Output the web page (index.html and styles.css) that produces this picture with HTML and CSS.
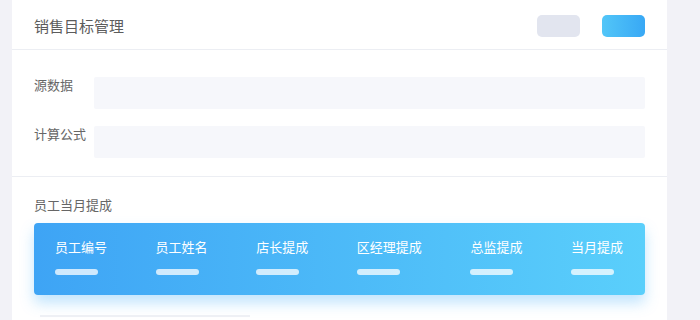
FILE: index.html
```html
<!DOCTYPE html>
<html lang="zh">
<head>
<meta charset="utf-8">
<link rel="stylesheet" href="styles.css">
</head>
<body>
<div class="card">
  <div class="header">
    <div class="title">销售目标管理</div>
    <div class="actions">
      <span class="btn btn-grey"></span>
      <span class="btn btn-blue"></span>
    </div>
  </div>
  <div class="form">
    <div class="row"><span class="label">源数据</span><div class="input"></div></div>
    <div class="row"><span class="label">计算公式</span><div class="input"></div></div>
  </div>
  <div class="section">
    <div class="section-title">员工当月提成</div>
    <div class="table-head">
      <div class="col"><span>员工编号</span><i class="bar"></i></div>
      <div class="col"><span>员工姓名</span><i class="bar"></i></div>
      <div class="col"><span>店长提成</span><i class="bar"></i></div>
      <div class="col"><span>区经理提成</span><i class="bar"></i></div>
      <div class="col"><span>总监提成</span><i class="bar"></i></div>
      <div class="col"><span>当月提成</span><i class="bar"></i></div>
    </div>
    <div class="next-row"></div>
  </div>
</div>
</body>
</html>
```
FILE: styles.css
```css
html, body {
  margin: 0;
  padding: 0;
  background: #f2f2f7;
  height: 320px;
  overflow: hidden;
}
body {
  font-family: "Noto Sans CJK SC", "Noto Sans", sans-serif;
  color: #666;
}
.card {
  margin-left: 12px;
  width: 655px;
  height: 320px;
  background: #fff;
}
.header {
  height: 50px;
  box-sizing: border-box;
  border-bottom: 1px solid #eceef3;
  display: flex;
  align-items: center;
  justify-content: space-between;
  padding: 0 22px 0 22px;
}
.title {
  font-size: 15px;
  color: #5c5c5c;
  line-height: 20px;
  margin-top: 3px;
}
.actions {
  display: flex;
  gap: 22px;
  margin-top: 2px;
}
.btn {
  display: block;
  width: 43px;
  height: 22px;
  border-radius: 5px;
}
.btn-grey { background: #e2e5ef; }
.btn-blue { background: linear-gradient(90deg, #52c6f8, #38a8f5); }
.form {
  padding: 27px 22px 18px 22px;
  display: flex;
  flex-direction: column;
  gap: 17px;
  border-bottom: 1px solid #eceef3;
}
.row {
  display: flex;
  align-items: flex-start;
}
.label {
  width: 60px;
  font-size: 13px;
  line-height: 16px;
  color: #666;
}
.input {
  flex: 1;
  height: 32px;
  background: #f6f7fb;
  border-radius: 2px;
}
.section {
  padding: 20px 22px 0 22px;
}
.section-title {
  font-size: 13px;
  line-height: 16px;
  color: #666;
  margin-bottom: 10px;
}
.table-head {
  height: 72px;
  border-radius: 4px;
  background: linear-gradient(90deg, #3ea4f5, #5acffb);
  box-shadow: 0 8px 14px rgba(80, 180, 250, 0.35);
  display: flex;
  justify-content: space-between;
  padding: 0 22px 0 21px;
}
.col {
  display: flex;
  flex-direction: column;
  padding-top: 16px;
}
.col span {
  font-size: 13px;
  line-height: 16px;
  color: #fff;
  white-space: nowrap;
}
.bar {
  display: block;
  width: 43px;
  height: 6px;
  border-radius: 3px;
  background: rgba(255, 255, 255, 0.75);
  margin-top: 14px;
}
.next-row {
  margin-top: 20px;
  margin-left: 6px;
  width: 210px;
  height: 2px;
  background: #eef0f5;
}
```
